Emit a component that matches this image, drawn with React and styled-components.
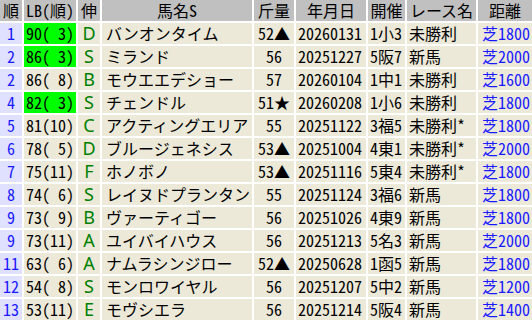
import styled, { createGlobalStyle } from "styled-components";

const COLORS = {
  head: "#c0c0c0",
  cell: "#ece9d8",
  rank: "#e0e0ff",
  hot: "#00ff00",
  blue: "#1a1aff",
  green: "#008000",
};

const rows = [
  ["1", "90( 3)", true, "D", "バンオンタイム", "52▲", "20260131", "1小3", "未勝利", "芝1800"],
  ["2", "86( 3)", true, "S", "ミランド", "56", "20251227", "5阪7", "新馬", "芝2000"],
  ["2", "86( 8)", false, "B", "モウエエデショー", "57", "20260104", "1中1", "未勝利", "芝1600"],
  ["4", "82( 3)", true, "S", "チェンドル", "51★", "20260208", "1小6", "未勝利", "芝1800"],
  ["5", "81(10)", false, "C", "アクティングエリア", "55", "20251122", "3福5", "未勝利*", "芝1800"],
  ["6", "78( 5)", false, "D", "ブルージェネシス", "53▲", "20251004", "4東1", "未勝利*", "芝2000"],
  ["7", "75(11)", false, "F", "ホノボノ", "53▲", "20251116", "5東4", "未勝利*", "芝1800"],
  ["8", "74( 6)", false, "S", "レイヌドプランタン", "55", "20251124", "3福6", "新馬", "芝1800"],
  ["9", "73( 9)", false, "B", "ヴァーティゴー", "56", "20251026", "4東9", "新馬", "芝1800"],
  ["9", "73(11)", false, "A", "ユイバイハウス", "56", "20251213", "5名3", "新馬", "芝2000"],
  ["11", "63( 6)", false, "A", "ナムラシンジロー", "52▲", "20250628", "1函5", "新馬", "芝1800"],
  ["12", "54( 8)", false, "S", "モンロワイヤル", "56", "20251207", "5中2", "新馬", "芝1200"],
  ["13", "53(11)", false, "E", "モヴシエラ", "56", "20251214", "5阪4", "新馬", "芝1400"],
];

const headers = ["順", "LB(順)", "伸", "馬名S", "斤量", "年月日", "開催", "レース名", "距離"];

const App = () => {
  return (
    <>
      <GlobalStyle />
      <Grid>
        {headers.map((h) => (
          <Head key={h}>{h}</Head>
        ))}
        {rows.map(([rank, lb, hot, grow, name, kin, date, place, race, dist], i) => (
          <Row key={i}>
            <Rank>{rank}</Rank>
            <Cell $bg={hot ? COLORS.hot : COLORS.cell} $pad="2px">
              {lb}
            </Cell>
            <Grow>{grow}</Grow>
            <Cell $pad="4px">{name}</Cell>
            <Cell $align="center">{kin}</Cell>
            <Cell $pad="2px">{date}</Cell>
            <Cell $pad="2px">{place}</Cell>
            <Cell $pad="2px">{race}</Cell>
            <Cell $pad="4px" $color={COLORS.blue}>
              {dist}
            </Cell>
          </Row>
        ))}
      </Grid>
    </>
  );
};

const GlobalStyle = createGlobalStyle`
  html, body {
    margin: 0;
    padding: 0;
    background: #ffffff;
    overflow: hidden;
  }
`;

const Grid = styled.div`
  display: grid;
  grid-template-columns: 22px 52px 22px 150px 40px 70px 37px 69px 54px;
  grid-auto-rows: 21px;
  gap: 2px;
  width: 532px;
  font-family: "Noto Sans CJK JP", sans-serif;
  font-feature-settings: "hwid" 1;
  font-size: 16px;
  line-height: 21px;
  color: #000;
`;

const Row = styled.div`
  display: contents;
`;

const Head = styled.div`
  background: ${COLORS.head};
  text-align: center;
  white-space: nowrap;
`;

const Cell = styled.div`
  background: ${(p) => p.$bg || COLORS.cell};
  color: ${(p) => p.$color || "#000"};
  text-align: ${(p) => p.$align || "left"};
  padding-left: ${(p) => p.$pad || "0"};
  white-space: pre;
`;

const Rank = styled(Cell)`
  background: ${COLORS.rank};
  color: ${COLORS.blue};
  text-align: center;
`;

const Grow = styled(Cell)`
  color: ${COLORS.green};
  text-align: center;
  font-family: "Noto Sans", sans-serif;
  font-feature-settings: normal;
  font-size: 18px;
`;

export default App;
